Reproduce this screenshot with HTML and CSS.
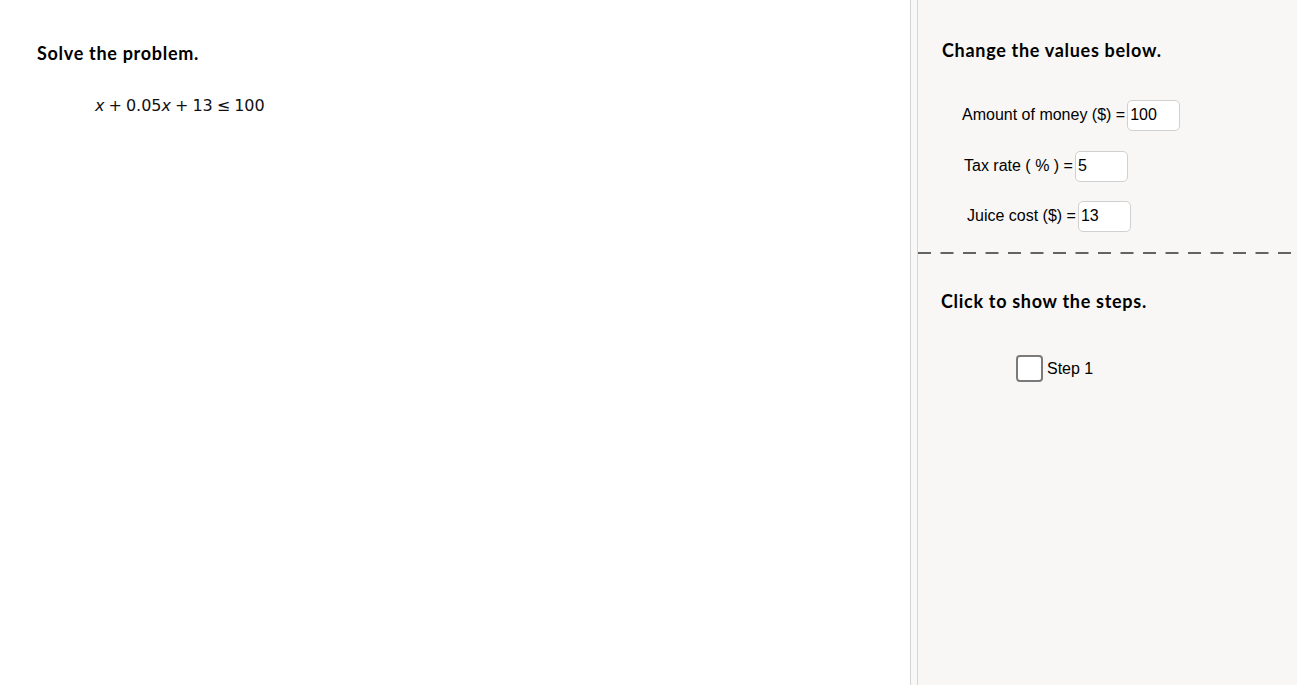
FILE: index.html
```html
<!DOCTYPE html>
<html lang="en">
<head>
	<meta charset="UTF-8">
	<title>Solve the problem</title>
	<link rel="stylesheet" href="styles.css">
</head>
<body>
	<div class="app">
		<div class="graphics">
			<h2 class="title">Solve the problem.</h2>
			<div class="formula">
				<i>x</i><span class="op">+</span>0.05<i>x</i><span class="op">+</span>13<span class="op">≤</span>100
			</div>
		</div>

		<div class="splitter"></div>

		<div class="panel">
			<h2 class="panel-title">Change the values below.</h2>

			<div class="field field-money">
				<label for="money">Amount of money ($) =</label>
				<input type="text" class="ipt" id="money" value="100">
			</div>
			<div class="field field-tax">
				<label for="tax">Tax rate ( % ) =</label>
				<input type="text" class="ipt" id="tax" value="5">
			</div>
			<div class="field field-juice">
				<label for="juice">Juice cost ($) =</label>
				<input type="text" class="ipt" id="juice" value="13">
			</div>

			<svg class="dash" width="379" height="4" viewBox="0 0 379 4">
				<line x1="0" y1="2" x2="379" y2="2" stroke="#333" stroke-width="1.6" stroke-dasharray="13 9.5"/>
			</svg>

			<h2 class="panel-title steps-title">Click to show the steps.</h2>

			<label class="step">
				<span class="box"></span>
				<span>Step 1</span>
			</label>
		</div>
	</div>
</body>
</html>
```

FILE: styles.css
```css
*{
	box-sizing: border-box;
	margin: 0;
	padding: 0;
}
html, body{
	height: 100%;
}
body{
	font-family: "Liberation Sans", Arial, sans-serif;
	color: #000;
	background: #fff;
	overflow: hidden;
}
.app{
	display: flex;
	height: 685px;
}
.graphics{
	width: 910px;
	flex: none;
	background: #fff;
	padding: 42px 0 0 37px;
}
.title, .panel-title{
	font-family: Lato, "DejaVu Sans", sans-serif;
	font-size: 18px;
	font-weight: bold;
	line-height: 22px;
	letter-spacing: 0.7px;
}
.formula{
	margin: 31px 0 0 58px;
	font-family: "DejaVu Sans", sans-serif;
	font-size: 16px;
	line-height: 22px;
	color: #111;
}
.formula i{
	font-style: italic;
}
.op{
	margin: 0 4px;
}
.splitter{
	width: 8px;
	flex: none;
	border-left: 1px solid #d6d6d6;
	border-right: 1px solid #d6d6d6;
	background: #f8f8f8;
}
.panel{
	flex: 1;
	background: #f8f7f5;
	padding: 39px 0 0 0;
}
.panel-title{
	margin-left: 24px;
}
.field{
	display: flex;
	align-items: center;
	height: 30px;
	font-size: 16px;
}
.field label{
	margin-right: 2px;
	white-space: nowrap;
}
.field-money{
	margin: 39px 0 0 44px;
}
.field-tax{
	margin: 21px 0 0 46px;
}
.field-juice{
	margin: 20px 0 0 49px;
}
.ipt{
	width: 53px;
	height: 31px;
	border: 1px solid #d0d0d0;
	border-radius: 5px;
	background: #fff;
	font-family: "Liberation Sans", Arial, sans-serif;
	font-size: 16px;
	padding: 0 2px;
	outline: none;
	color: #000;
}
.dash{
	display: block;
	margin-top: 20px;
}
.steps-title{
	margin-top: 35px;
	margin-left: 23px;
}
.step{
	display: flex;
	align-items: center;
	margin: 43px 0 0 98px;
	font-size: 16px;
}
.box{
	width: 27px;
	height: 27px;
	border: 2px solid #7a7a7a;
	border-radius: 4px;
	background: #fff;
	margin-right: 4px;
}
```
